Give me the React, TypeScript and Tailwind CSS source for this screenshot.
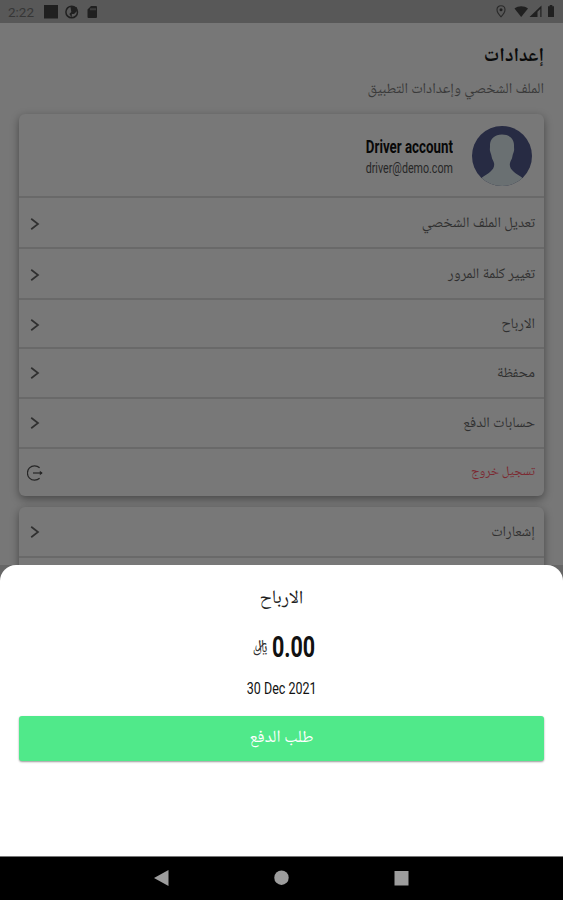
import type { ReactNode } from 'react'

const arabic = "font-['Noto_Naskh_Arabic_UI','Noto_Naskh_Arabic','Noto_Sans_Arabic','DejaVu_Sans',sans-serif]"
const latin = "font-['Roboto',sans-serif] whitespace-nowrap"

type Item = {
  label: string
  className: string
  danger?: boolean
}

const accountItems: Item[] = [
  { label: 'تعديل الملف الشخصي', className: 'h-[51px] border-t-2 pt-0.5' },
  { label: 'تغيير كلمة المرور', className: 'h-[51px] border-t-2 pt-0.5' },
  { label: 'الارباح', className: 'h-[49px] border-t-2 pt-0.5' },
  { label: 'محفظة', className: 'h-[50px] border-t-2' },
  { label: 'حسابات الدفع', className: 'h-[50px] border-t-2' },
  { label: 'تسجيل خروج', className: 'h-[49px] border-t-2', danger: true },
]

const Chevron = () => (
  <svg className="size-4" viewBox="0 0 16 16" fill="none" stroke="#303030" strokeWidth="1.7">
    <path d="M4.2 2.8 11 8l-6.8 5.2" />
  </svg>
)

const Exit = () => (
  <svg className="size-4" viewBox="0 0 16 16" fill="none" stroke="#262626" strokeWidth="1.2">
    <path d="M12.6 2.8A7.2 7.2 0 1 0 12.6 13.2" />
    <path d="M6 8h9" />
    <path d="M12.8 5.8 15.700 8l-2.900 2.200Z" fill="#262626" stroke="none" />
  </svg>
)

const Row = ({ item }: { item: Item }) => (
  <div className={`flex items-center justify-between border-[#696969] pr-[9px] pl-2 ${item.className}`}>
    {item.danger ? <Exit /> : <Chevron />}
    <span dir="rtl" className={`${arabic} ${item.danger ? 'text-[13px] text-[#7c2931]' : 'text-[14.7px] text-[#303030]'}`}>
      {item.label}
    </span>
  </div>
)

const Card = ({ children, className }: { children: ReactNode; className: string }) => (
  <div className={`mx-[19px] rounded-md bg-[#787878] shadow-[0_3px_9px_rgba(0,0,0,0.4)] ${className}`}>{children}</div>
)

const StatusBar = () => (
  <div className="flex h-[23px] items-center bg-[#585858] px-2">
    <span className="w-[36px] pt-0.5 font-['Roboto',sans-serif] text-[13.5px] text-[#363636]">2:22</span>
    <svg className="h-[23px] w-14" viewBox="0 0 56 23" fill="#202020">
      <path d="M0 5h14v13.5H0z" />
      <circle cx="27.7" cy="12" r="5.8" fill="none" stroke="#202020" strokeWidth="1.5" />
      <path d="M26.5 7h6l.5 4-3 3h-2.2v3.5l-2.500-3.500 2-2Z" />
      <path fillRule="evenodd" d="M47 6h5q1 0 1 1v10q0 1-1 1h-7.500q-1 0-1-1V9.500ZM46.500 8.200v2h1v-2Zm2 0v2h1v-2Zm2 0v2h1v-2Z" />
    </svg>
    <svg className="ml-auto h-[23px] w-[60px]" viewBox="0 0 60 23" fill="#202020">
      <path d="M6 5.800c-2.300 0-4 1.700-4 4 0 2.900 4 7 4 7s4-4.100 4-7c0-2.300-1.700-4-4-4Z" fill="none" stroke="#292929" strokeWidth="1.1" />
      <circle cx="6" cy="9.8" r="1.5" />
      <path d="M19.500 8.500c4-3 9.500-3 13.500 0L26.200 17Z" />
      <path d="M34.500 17 46.500 5.500V17h-1.200V9L42.500 11.700V17Z" />
      <path d="M53 6.200h1.700V5h2.600v1.200H59V17h-6Z" />
    </svg>
  </div>
)

const Avatar = () => (
  <svg className="size-[60px]" viewBox="0 0 60 60">
    <clipPath id="avatar">
      <circle cx="30" cy="30" r="30" />
    </clipPath>
    <g clipPath="url(#avatar)">
      <path d="M0 0h60v60H0z" fill="#272b43" />
      <path
        d="M30 8.500c-7.500 0-12.500 4.500-12 12 0 2-.5 3 .3 5.500.6 2 1 2.500 1.400 5 .4 2.800 1.800 3.500 2.300 6 .8 4-1 6.500-4 9-2.500 2-5 3.300-8 5.500V60h40v-8.500c-3-2.200-5.500-3.500-8-5.500-3-2.500-4.800-5-4-9 .5-2.500 1.900-3.200 2.300-6 .4-2.500.8-3 1.400-5 .8-2.500.3-3.500.3-5.500.5-7.500-4.500-12-12-12Z"
        fill="#6a7072"
      />
    </g>
  </svg>
)

const Settings = () => (
  <div className="h-[565px] overflow-hidden bg-[#777]">
    <StatusBar />
    <div dir="rtl" className={`h-[91px] px-[19px] pt-[21px] ${arabic}`}>
      <h1 className="text-[19.5px] leading-[26px] font-bold text-[#0b0b0b]">إعدادات</h1>
      <p className="pt-[7px] text-[14.8px] leading-6 text-[#3a3a3a]">الملف الشخصي وإعدادات التطبيق</p>
    </div>
    <Card className="h-[382px]">
      <div dir="rtl" className="flex h-[82px] items-center gap-[19px] px-3 pt-0.5">
        <Avatar />
        <div dir="ltr" className={`pt-[3px] text-right ${latin}`}>
          <p className="origin-right scale-x-[0.72] text-[18.5px] leading-[22px] font-bold text-[#080808]">Driver account</p>
          <p className="origin-right scale-x-[0.737] pt-px text-[14.5px] leading-5 text-[#272727]">driver@demo.com</p>
        </div>
      </div>
      {accountItems.map((item) => (
        <Row key={item.label} item={item} />
      ))}
    </Card>
    <Card className="mt-[11px] h-[82px]">
      <Row item={{ label: 'إشعارات', className: 'h-12 border-b-2 box-content pt-px' }} />
    </Card>
  </div>
)

const EarningsSheet = () => (
  <div className="h-[291px] bg-[#666]">
    <div className="flex h-full flex-col items-center rounded-t-2xl bg-white px-[19px]">
      <h2 dir="rtl" className={`mt-5 text-[19px] leading-7 text-[#222] ${arabic}`}>الارباح</h2>
      <div className="mt-[17px] flex h-9 items-center gap-1 pl-1">
        <span className={`text-[16px] text-[#333] ${arabic}`}>﷼</span>
        <span className={`w-[43px] text-[29px] font-bold text-[#111] ${latin}`}>
          <span className="inline-block origin-left scale-x-[0.74]">0.00</span>
        </span>
      </div>
      <p className={`mt-[13px] scale-x-[0.78] text-[16px] leading-5 text-[#111] ${latin}`}>30 Dec 2021</p>
      <button dir="rtl" className={`mt-[17px] h-[45px] w-full rounded-[3px] bg-[#50e98a] pb-0.5 text-[17px] text-white shadow-[0_1px_2px_rgba(0,0,0,0.4)] ${arabic}`}>
        طلب الدفع
      </button>
    </div>
  </div>
)

const NavBar = () => (
  <div className="h-11 border-t border-[#777] bg-black">
    <svg className="h-[43px] w-full" viewBox="0 0 563 43" fill="#9d9d9d">
      <path d="m154 21 14.500-8v16Z" />
      <circle cx="281.500" cy="20.700" r="7.200" />
      <path d="M394.500 14h14v14.500h-14z" />
    </svg>
  </div>
)

export default function App() {
  return (
    <div className="h-[900px] w-[563px] overflow-hidden">
      <Settings />
      <EarningsSheet />
      <NavBar />
    </div>
  )
}
